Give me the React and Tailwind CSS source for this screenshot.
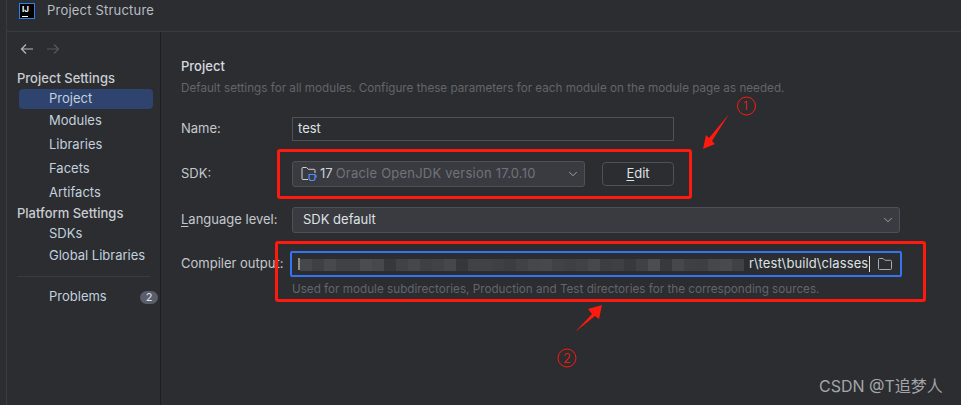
import { ChevronDown } from 'lucide-react'

const font = { fontFamily: 'Inter, "Noto Sans CJK SC", sans-serif' }

const topItems = [
  { label: 'Project', h: 'h-[21px]', active: true },
  { label: 'Modules', h: 'h-[24px]' },
  { label: 'Libraries', h: 'h-[24px]' },
  { label: 'Facets', h: 'h-[24px]' },
  { label: 'Artifacts', h: 'h-[23px]' },
]

// mosaic that hides the start of the path
const blurBlocks = [
  'bg-[#45474b]', 'bg-[#3e4044]', 'bg-[#47494d]', 'bg-[#3f4145]', 'bg-[#3f4145]', 'bg-[#4a4c50]', 'bg-[#46484c]',
  'bg-[#36383c]', 'bg-[#404246]', 'bg-[#45474b]', 'bg-[#3e4044]', 'bg-[#404246]', 'bg-[#45474b]', 'bg-[#35373a]',
  'bg-[#404246]', 'bg-[#404246]', 'bg-[#3e4044]', 'bg-[#3b3d41]', 'bg-[#404246]', 'bg-[#45474b]', 'bg-[#46484c]',
  'bg-[#404246]', 'bg-[#3e4044]', 'bg-[#404246]', 'bg-[#46484c]', 'bg-[#3c3e42]', 'bg-[#3e4044]', 'bg-[#37393d]',
  'bg-[#3f4145]', 'bg-[#4b4d51]', 'bg-[#37393d]', 'bg-[#45474b]', 'bg-[#3e4044]', 'bg-[#3d3f43]', 'bg-[#45474b]',
  'bg-[#474a4e]', 'bg-[#3f4145]',
]

function FolderIcon({ className }) {
  return (
    <svg viewBox="0 0 16 16" fill="none" className={className}>
      <path d="M1.5 3.5a1 1 0 0 1 1-1h3.6l1.8 1.8h5.6a1 1 0 0 1 1 1v7.2a1 1 0 0 1-1 1h-11a1 1 0 0 1-1-1z" stroke="#a8adb5" strokeWidth="1" />
    </svg>
  )
}

function SdkIcon() {
  return (
    <svg viewBox="0 0 16 16" fill="none" className="w-[16px] h-[16px] shrink-0">
      <path d="M7 13.5H2a1 1 0 0 1-1-1V2.5a1 1 0 0 1 1-1h3.5l1.8 1.8H13a1 1 0 0 1 1 1V7" stroke="#ced0d6" strokeWidth="1" />
      <path d="M8 8.5h6v3.5a2.5 2.5 0 0 1-2.5 2.5h-1A2.5 2.5 0 0 1 8 12z" stroke="#548af7" strokeWidth="1.2" />
      <path d="M14 9.5h1.2v1.8H14" stroke="#548af7" strokeWidth="1" />
    </svg>
  )
}

function Sidebar() {
  return (
    <aside className="w-[154px] shrink-0 border-r border-[#1e1f22] pt-[8px]">
      <div className="h-[18px] flex items-center pl-[13px] gap-[12px]">
        <svg viewBox="0 0 14 12" fill="none" className="w-[14px] h-[12px]">
          <path d="M13 6H1.5M6 1.5 1.5 6 6 10.5" stroke="#b4b8bf" strokeWidth="1.2" />
        </svg>
        <svg viewBox="0 0 14 12" fill="none" className="w-[14px] h-[12px]">
          <path d="M1 6h11.5M8 1.5 12.5 6 8 10.5" stroke="#55585e" strokeWidth="1.2" />
        </svg>
      </div>
      <div className="mt-[12px] h-[18px] flex items-center pl-[10px] text-[13px] font-medium text-[#c9ccd2]">Project Settings</div>
      <nav className="flex flex-col">
        {topItems.map((item) => (
          <div key={item.label} className={`${item.h} flex items-center`}>
            <div className={`w-[134px] ml-[12px] h-[20px] flex items-center pl-[30px] rounded-[4px] text-[13px] text-[#c3d0de] ${item.active ? 'bg-[#2e436e]' : ''}`}>
              {item.label}
            </div>
          </div>
        ))}
      </nav>
      <div className="h-[20px] flex items-center pl-[10px] text-[13px] font-medium text-[#c9ccd2]">Platform Settings</div>
      <div className="h-[20px] flex items-center pl-[42px] text-[13px] text-[#c3d0de]">SDKs</div>
      <div className="h-[24px] flex items-center pl-[42px] text-[13px] text-[#c3d0de]">Global Libraries</div>
      <div className="mt-[8px] mx-[10px] border-t border-[#393b40]" />
      <div className="mt-[10px] h-[20px] flex items-center justify-between pl-[42px] pr-[2px] text-[13px] text-[#c3d0de]">
        <span>Problems</span>
        <span className="w-[18px] h-[13px] rounded-full bg-[#5a5d6b] text-[11px] leading-[13px] text-center text-[#dfe1e5]">2</span>
      </div>
    </aside>
  )
}

function Row({ label, className, children }) {
  return (
    <div className={`flex items-center ${className}`}>
      <div className="w-[111px] shrink-0 text-[13px] text-[#c5c8ce]">{label}</div>
      {children}
    </div>
  )
}

function Content() {
  return (
    <main className="flex-1 min-w-0 pl-[20px] pt-[26px]">
      <h1 className="h-[18px] flex items-center text-[13px] font-medium text-[#d7dae0]">Project</h1>
      <p className="mt-[4px] h-[18px] flex items-center text-[11.7px] text-[#62656c]">
        Default settings for all modules. Configure these parameters for each module on the module page as needed.
      </p>

      <Row label="Name:" className="mt-[19px]">
        <div className="w-[382px] h-[24px] border border-[#4e5157] flex items-center pl-[5px] text-[13px] text-[#dfe1e5]">test</div>
      </Row>

      <Row label="SDK:" className="mt-[20px]">
        <div className="w-[293px] h-[26px] rounded-[3px] border border-[#4e5157] bg-[#393b40] flex items-center pl-[8px] pr-[4px] text-[13px]">
          <SdkIcon />
          <span className="ml-[3px] text-[#cfd1d6]">17</span>
          <span className="ml-[3px] text-[#6f737a] tracking-[0.22px]">Oracle OpenJDK version 17.0.10</span>
          <ChevronDown className="ml-auto w-[14px] h-[14px] text-[#a8adb5]" strokeWidth={1.5} />
        </div>
        <button className="ml-[17px] w-[72px] h-[24px] rounded-[4px] border border-[#4e5157] text-[13px] text-[#dfe1e5]">
          <span className="underline underline-offset-2">E</span>dit
        </button>
      </Row>

      <Row label={<><span className="underline underline-offset-2">L</span>anguage level:</>} className="mt-[20px]">
        <div className="w-[608px] h-[26px] rounded-[3px] border border-[#4e5157] bg-[#393b40] flex items-center pl-[10px] pr-[4px] text-[13px] text-[#dfe1e5]">
          SDK default
          <ChevronDown className="ml-auto w-[14px] h-[14px] text-[#a8adb5]" strokeWidth={1.5} />
        </div>
      </Row>

      <Row label="Compiler output:" className="mt-[18px]">
        <div className="-ml-[2px] w-[612px] h-[26px] rounded-[2px] border-2 border-[#3574f0] flex items-center pl-[6px] pr-[7px] text-[13px] text-[#dfe1e5]">
          <span className="w-[2px] h-[12px] bg-[#8f8a84]" />
          <div className="flex h-[12px] mt-[1px]">
            {blurBlocks.map((bg, i) => (
              <span key={i} className={`w-[12px] ${bg}`} />
            ))}
          </div>
          <span className="ml-[5px] tracking-[0.1px]">r\test\build\classes</span>
          <span className="ml-[1px] w-px h-[16px] bg-[#dfe1e5]" />
          <FolderIcon className="ml-auto w-[16px] h-[16px]" />
        </div>
      </Row>
      <p className="ml-[111px] mt-[4px] h-[18px] flex items-center text-[11.7px] text-[#62656c]">
        Used for module subdirectories, Production and Test directories for the corresponding sources.
      </p>
    </main>
  )
}

// red markup drawn over the screenshot
function Annotations() {
  return (
    <>
      <div className="absolute left-[277px] top-[149px] w-[415px] h-[50px] rounded-[3px] border-[3px] border-[#ff1a0f]" />
      <div className="absolute left-[275px] top-[241px] w-[651px] h-[61px] rounded-[3px] border-[3px] border-[#ff1a0f]" />
      <svg viewBox="0 0 961 405" className="absolute inset-0 w-[961px] h-[405px] pointer-events-none">
        <path d="M729 114 L712 141 L715 144 L703 149 L706 135 L709 138 Z" fill="#ff1a0f" />
        <path d="M575 332 L592 314 L588 309 L602 305 L599 319 L595 316 Z" fill="#ff1a0f" />
        <circle cx="746.5" cy="106" r="9" fill="none" stroke="#ff1a0f" />
        <circle cx="567" cy="358" r="9" fill="none" stroke="#ff1a0f" />
      </svg>
      <span className="absolute left-[743px] top-[99px] text-[12px] leading-[14px] font-light text-[#ff1a0f]">1</span>
      <span className="absolute left-[563px] top-[351px] text-[13px] leading-[14px] font-light text-[#ff1a0f]">2</span>
      <span className="absolute left-[819px] top-[376px] text-[16px] leading-[20px] text-[#a3a5a8]">CSDN @T追梦人</span>
    </>
  )
}

export default function App() {
  return (
    <div className="relative w-[961px] h-[405px] overflow-hidden bg-[#2b2d30] flex" style={font}>
      <div className="w-[7px] shrink-0 border-r border-[#393b40]" />
      <div className="flex-1 min-w-0 flex flex-col">
        <header className="h-[32px] shrink-0 border-b border-[#393b40] flex items-center pl-[12px] pb-[10px]">
          <div className="w-[16px] h-[16px] border-[1.5px] border-[#2f7ff0] bg-black relative">
            <span className="absolute left-[2px] top-[1px] text-[8px] leading-[8px] font-bold text-white">IJ</span>
            <span className="absolute left-[2px] bottom-[1px] w-[6px] h-px bg-white" />
          </div>
          <span className="ml-[12px] mt-[1px] text-[13px] tracking-[0.2px] text-[#b9bec6]">Project Structure</span>
        </header>
        <div className="flex-1 min-h-0 flex">
          <Sidebar />
          <Content />
        </div>
      </div>
      <Annotations />
    </div>
  )
}
